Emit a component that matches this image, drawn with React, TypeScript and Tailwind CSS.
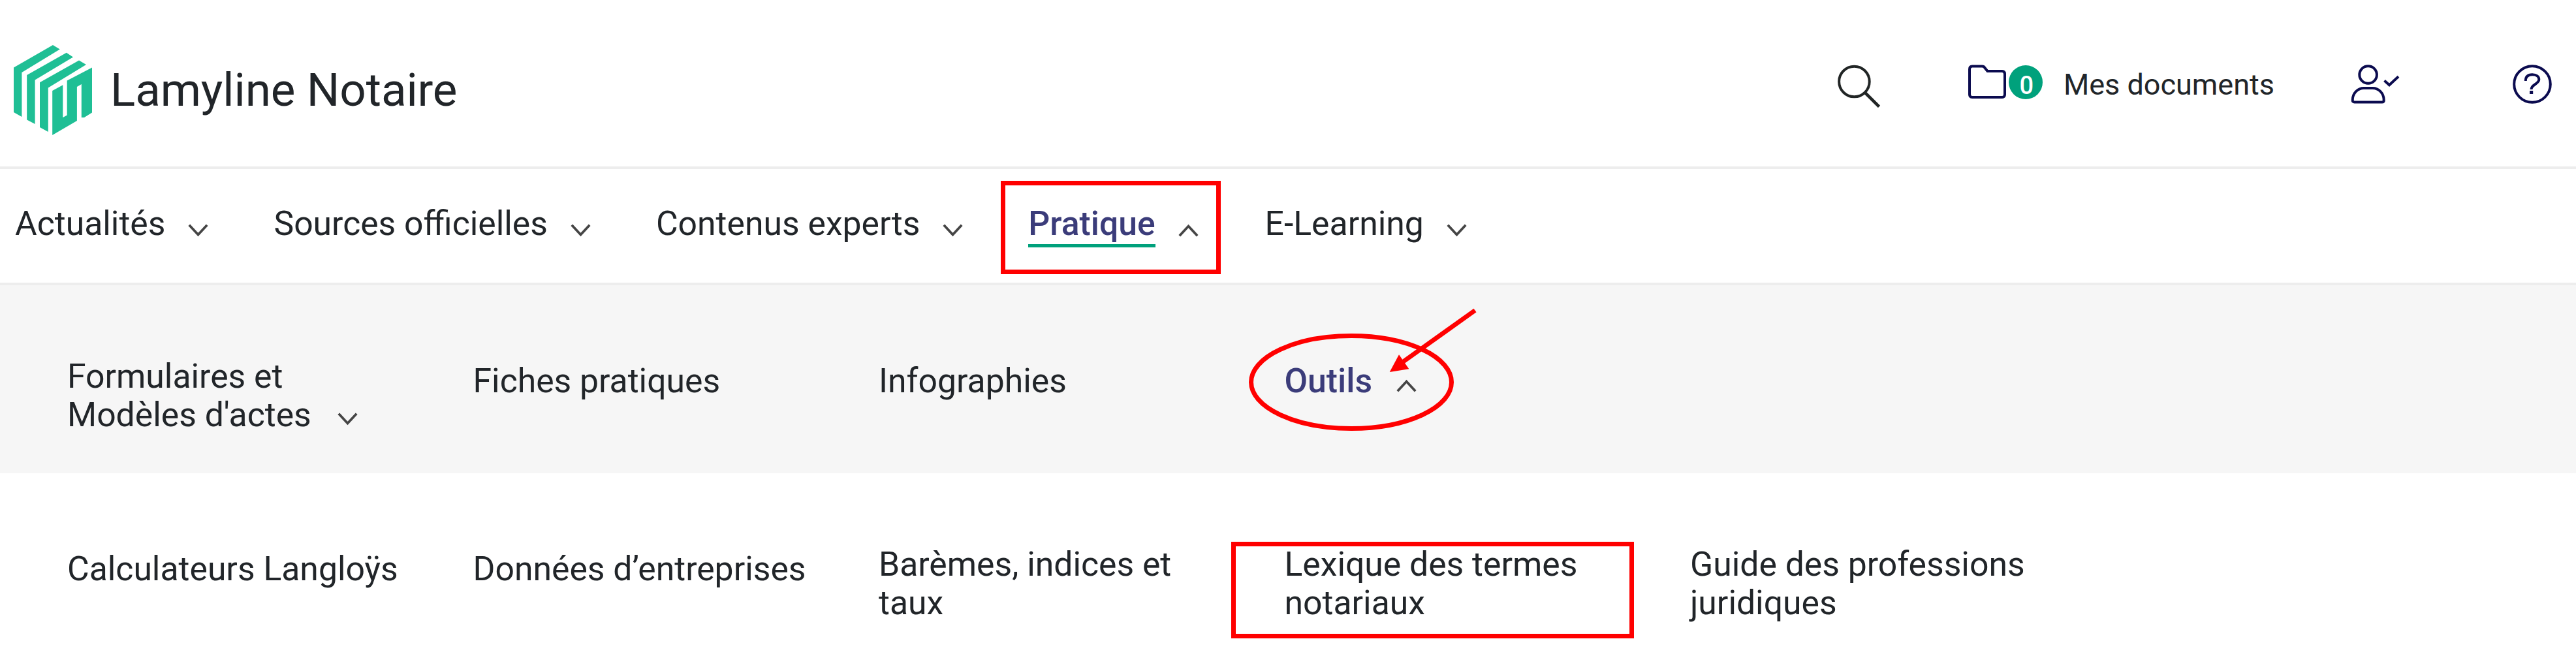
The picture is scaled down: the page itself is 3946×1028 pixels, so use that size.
import React from 'react';

interface MenuItem {
    lines: string[];
    active?: boolean;
    hasChildren?: boolean;
}

const mainMenu: MenuItem[] = [
    { lines: ['Actualités'] },
    { lines: ['Sources officielles'] },
    { lines: ['Contenus experts'] },
    { lines: ['Pratique'], active: true },
    { lines: ['E-Learning'] },
];

const pratiqueMenu: MenuItem[] = [
    { lines: ['Formulaires et', "Modèles d'actes"], hasChildren: true },
    { lines: ['Fiches pratiques'] },
    { lines: ['Infographies'] },
    { lines: ['Outils'], active: true, hasChildren: true },
];

const outilsMenu: MenuItem[] = [
    { lines: ['Calculateurs Langloÿs'] },
    { lines: ['Données d’entreprises'] },
    { lines: ['Barèmes, indices et', 'taux'] },
    { lines: ['Lexique des termes', 'notariaux'] },
    { lines: ['Guide des professions', 'juridiques'] },
];

const Logo = () => (
    <svg width="120" height="138" viewBox="0 0 120 138" fill="#1fbf95">
        <path d="M60 0L70.7 6.5L12.4 42V110L0 103V34.5Z" />
        <path d="M80.8 11.7L91 18.5L32.6 53.5V121L20.2 114.5V46Z" />
        <path d="M100 23.4L111 30L52.8 65.6V133L40 126V57.3Z" />
        <path d="M59.2 70L75.3 61.3V111L81.7 107.5V54.6L120 34.5V103.5L108 111H103.8V60L96.9 64V116L59.2 138Z" />
    </svg>
);

const SearchIcon = () => (
    <svg width="66" height="72" viewBox="0 0 66 72" fill="none" stroke="#212525" strokeWidth="4">
        <circle cx="25.4" cy="32" r="23.3" />
        <path d="M42 49L63.5 70.5" strokeWidth="4.6" />
    </svg>
);

const FolderIcon = () => (
    <svg width="62" height="72" viewBox="0 0 62 72" fill="none" stroke="#0b0b4f" strokeWidth="4">
        <path d="M7 8.5H22.5Q25 8.5 26.5 11L30.5 16H53Q57 16 57 20.5V51.5Q57 56 53 56H7Q3 56 3 51.5V13Q3 8.5 7 8.5Z" />
    </svg>
);

const UserCheckIcon = () => (
    <svg width="77" height="72" viewBox="0 0 77 72" fill="none" stroke="#0b0b4f" strokeWidth="4">
        <circle cx="27.6" cy="21.5" r="13.3" />
        <path d="M6.5 63.5Q3.7 63.5 3.7 60.5C3.7 49.5 12 42 21 42H34.5C43.5 42 51.7 49.5 51.7 60.5Q51.7 63.5 49 63.5Z" />
        <path d="M52.5 30.5L60 37.2L74 24.3" />
    </svg>
);

const HelpIcon = () => (
    <svg width="62" height="72" viewBox="0 0 62 72" fill="none" stroke="#0b0b4f" strokeWidth="4">
        <circle cx="31" cy="36" r="27.8" />
        <path d="M20.8 31C20.8 24 25 21.3 31 21.3C37.5 21.3 41.3 24.5 41.3 28.8C41.3 36 29.5 36 29.5 44" />
        <path d="M27 48.5H32.2" strokeWidth="5" />
    </svg>
);

const Chevron = ({ up = false }: { up?: boolean }) => (
    <svg
        width="31"
        height="20"
        viewBox="0 0 31 20"
        fill="none"
        stroke="#454545"
        strokeWidth="3.8"
        className={up ? 'rotate-180' : ''}
    >
        <path d="M1.8 1.8L15.5 16.5L29.2 1.8" />
    </svg>
);

const SubMenu = ({ items }: { items: MenuItem[] }) => (
    <div className="grid grid-cols-[repeat(5,621.5px)] items-start pt-[111px] pl-[103px] leading-[58.6px]">
        {items.map((item) => (
            <a
                key={item.lines[0]}
                className={`flex items-end ${item.lines.length === 1 ? 'pt-[7px]' : ''} ${item.active ? 'gap-[37px] font-medium text-[#3b3c7a]' : 'gap-[40px]'}`}
            >
                <span>
                    {item.lines.map((line) => (
                        <span key={line} className="block whitespace-nowrap">{line}</span>
                    ))}
                </span>
                {item.hasChildren && (
                    <Chevron up={item.active} />
                )}
            </a>
        ))}
    </div>
);

export default function App() {
    return (
        <div className="relative w-[3946px] h-[1028px] overflow-hidden bg-white font-['Roboto',sans-serif] text-[#212529] text-[51.7px] [&_a>svg]:mb-[13px]">
            <header className="h-[259px] border-b-4 border-[#ededed] flex items-center justify-between pl-[21px] pr-[36px]">
                <div className="mt-[20px] flex items-center gap-[28px]">
                    <Logo />
                    <span className="text-[71px] leading-none tracking-[-0.1px]">Lamyline Notaire</span>
                </div>
                <div className="mt-[3px] flex items-center text-[45px] leading-none">
                    <SearchIcon />
                    <div className="ml-[133px] flex items-center">
                        <FolderIcon />
                        <span className="-mt-[7px] ml-px flex size-[52px] items-center justify-center rounded-full bg-[#00a17c] pt-[10px] pl-[3px] text-[38px] font-medium text-white">
                            0
                        </span>
                        <span className="ml-[32px]">Mes documents</span>
                    </div>
                    <div className="ml-[116px]">
                        <UserCheckIcon />
                    </div>
                    <div className="ml-[171px]">
                        <HelpIcon />
                    </div>
                </div>
            </header>

            <nav className="h-[178px] border-b-4 border-[#ededed] flex items-center gap-[100px] pb-[6px] pl-[23px] leading-[64px]">
                {mainMenu.map((item) => (
                    <a key={item.lines[0]} className="flex items-center gap-[35px] last:ml-[2px]">
                        {item.active ? (
                            <span className="relative font-medium text-[#3b3c7a]">
                                {item.lines[0]}
                                <span className="absolute inset-x-0 -bottom-[4px] h-[5px] bg-[#00a17c]" />
                            </span>
                        ) : (
                            <span>{item.lines[0]}</span>
                        )}
                        <span className="mt-[20px]">
                            <Chevron up={item.active} />
                        </span>
                    </a>
                ))}
            </nav>

            <section className="h-[288px] bg-[#f6f6f6]">
                <SubMenu items={pratiqueMenu} />
            </section>
            <section className="h-[303px]">
                <SubMenu items={outilsMenu} />
            </section>

            {/* Red annotations drawn over the menus */}
            <div className="absolute left-[1533px] top-[277px] h-[143px] w-[337px] border-[7px] border-[#ff0000]" />
            <div className="absolute left-[1886px] top-[830px] h-[148px] w-[617px] border-[7px] border-[#ff0000]" />
            <svg
                className="absolute left-[1900px] top-[460px]"
                width="380"
                height="210"
                viewBox="0 0 380 210"
                fill="none"
                stroke="#ff0000"
                strokeWidth="7"
            >
                <ellipse cx="170" cy="125.5" rx="153.5" ry="71" />
                <path d="M359.5 15.5L244 98" />
                <path d="M228.7 110L243 83.3L258.3 105.3Z" fill="#ff0000" stroke="none" />
            </svg>
        </div>
    );
}
